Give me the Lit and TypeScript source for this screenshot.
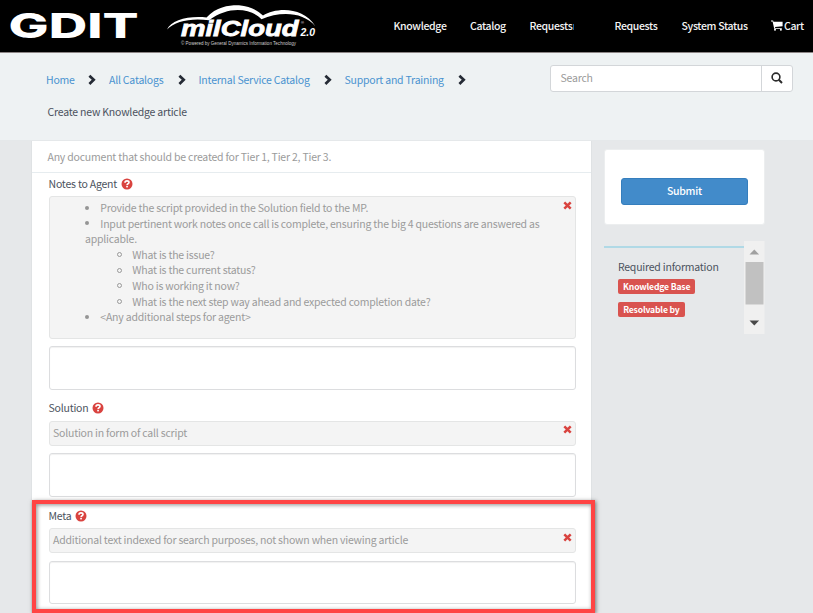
import { LitElement, html, css } from "lit";
import { customElement, property } from "lit/decorators.js";

@customElement("help-icon")
class HelpIcon extends LitElement {
  static styles = css`
    :host { display: block; width: 12px; height: 12px; }
    svg { display: block; }
  `;
  render() {
    return html`<svg width="12" height="12" viewBox="0 0 12 12">
      <circle cx="6" cy="6" r="5.5" fill="#d9433f" />
      <path d="M4 4.7C4 3.4 5 2.9 6 2.9S8 3.4 8 4.5C8 5.8 6.1 5.7 6.1 7" fill="none" stroke="#fff" stroke-width="1.6" />
      <rect x="5.2" y="7.8" width="1.7" height="1.6" fill="#fff" />
    </svg>`;
  }
}

@customElement("form-field")
class FormField extends LitElement {
  @property() label = "";
  @property() hint = "";
  @property({ type: Boolean }) tall = false;

  static styles = css`
    :host { display: flex; flex-direction: column; height: 107.3px; }
    :host([tall]) { height: 224.5px; }
    .label { display: flex; align-items: center; height: 22.5px; padding-bottom: 1px; gap: 3.5px; color: #4c5360; }
    .hint {
      display: flex; justify-content: space-between; box-sizing: border-box; height: 25.5px;
      padding: 0 3.5px; border: 1px solid #e4e5e5; border-radius: 3px; background: #f4f4f4; color: #9b9b9b;
    }
    :host([tall]) .hint { height: 143px; }
    .copy { line-height: 22px; }
    .close { flex: none; display: block; width: 9px; height: 9px; margin-top: 3.8px; }
    .input {
      box-sizing: border-box; height: 43.5px; margin-top: 7.3px; background: #fff;
      border: 1px solid #dcdddf; border-radius: 3px; box-shadow: inset 0 1px 1px rgba(0,0,0,.06);
    }
  `;
  render() {
    return html`
      <div class="label"><span>${this.label}</span><help-icon></help-icon></div>
      <div class="hint">
        <div class="copy">${this.hint}<slot></slot></div>
        <svg class="close" viewBox="0 0 9 9">
          <path d="M1.3 1.3L7.7 7.7M7.7 1.3L1.3 7.7" stroke="#d9433f" stroke-width="2.5" />
        </svg>
      </div>
      <div class="input"></div>`;
  }
}

@customElement("app-root")
class AppRoot extends LitElement {
  static styles = css`
    :host {
      display: block; position: relative; width: 813px; height: 613px; overflow: hidden;
      background: #e6e8ea; font: 10.5px/16px "Noto Sans CJK SC", "Noto Sans", sans-serif;
      letter-spacing: -.21px; white-space: nowrap;
    }
    .top { display: flex; box-sizing: border-box; height: 53px; background: #000; border-bottom: 1px solid #8c8585; }
    .logos { flex: none; display: block; width: 393.5px; height: 52px; letter-spacing: 0; }
    .nav { display: flex; align-items: center; height: 51px; color: #f4f4f4; font-weight: 500; letter-spacing: -.35px; }
    .nav span { display: block; }
    .n1 { width: 76.5px; } .n2 { width: 59.5px; } .n3 { width: 85px; }
    .n4 { width: 67px; } .n5 { width: 89px; }
    .tick { display: inline-block; width: 1px; height: 6px; margin-left: 1px; background: #12609c; }
    .cart { display: block; width: 12px; height: 11px; margin-right: 1.5px; }
    .sub {
      display: flex; justify-content: space-between; box-sizing: border-box; height: 87.5px;
      padding: 11.5px 20px 0 46px; background: #eef2f3; border-bottom: 1px solid #e5e8ea;
    }
    .crumbs { display: flex; height: 30px; align-items: center; color: #4a92d0; }
    .chev { display: block; width: 8px; height: 12px; margin-right: 13px; }
    .title { margin: 9px 0 0 1.5px; color: #4c5360; }
    .search { box-sizing: border-box; display: flex; width: 243px; height: 27px; border: 1px solid #d3d6d9; border-radius: 3px; background: #fff; overflow: hidden; }
    .query { flex: 1; padding-left: 9.5px; line-height: 24px; color: #9a9a9a; }
    .go { width: 30px; border-left: 1px solid #d3d6d9; display: flex; align-items: center; justify-content: center; }
    .body { display: flex; align-items: flex-start; gap: 12.5px; padding-left: 31px; }
    .form { box-sizing: border-box; width: 561px; height: 473px; background: #fff; border-left: 1px solid #dfe2e4; border-right: 1px solid #dfe2e4; }
    .intro { height: 31px; padding-left: 15.5px; line-height: 31px; border-bottom: 1px solid #e6ecef; color: #9b9b9b; }
    .fields { padding: 0 15px 0 16.5px; }
    .row { display: flex; height: 15.62px; line-height: 15.62px; }
    .list { padding-top: 3px; }
    .row.a { padding-left: 32px; }
    .row.b { padding-left: 64px; }
    .mark { width: 15.3px; display: flex; align-items: center; }
    .dot { width: 4px; height: 4px; border-radius: 50%; background: #959595; }
    .ring { box-sizing: border-box; width: 5px; height: 5px; border-radius: 50%; border: 1px solid #999; }
    .side { width: 161px; margin-left: -.6px; padding-top: 8.5px; }
    .card { box-sizing: border-box; height: 76px; border: 1px solid #eceeef; border-radius: 3px; background: #fff; padding: 27.5px 16px 0; }
    .submit { box-sizing: border-box; height: 27px; border-radius: 3px; border: 1px solid #357ebd; background: #428bca; color: #fff; text-align: center; line-height: 23.5px; font-weight: 500; letter-spacing: -.3px; }
    .required { display: flex; height: 93px; margin-top: 16px; }
    .info { flex: 1; box-sizing: border-box; margin-top: 5px; padding: 11px 0 0 14px; border-top: 2px solid #b0d9e6; color: #4c5360; }
    .tag { display: block; height: 14.5px; margin-bottom: 8.5px; border-radius: 2px; background: #d9534f; color: #fff; font-size: 8.6px; font-weight: 700; line-height: 14.5px; text-align: center; letter-spacing: -.16px; }
    .t1 { width: 77.5px; margin-top: 4px; }
    .t2 { width: 67px; }
    .bar { display: block; width: 20.5px; height: 93px; }
    .mark-area { position: absolute; box-sizing: border-box; left: 32px; top: 500px; width: 563px; height: 113px; border: 4px solid #ff4444; box-shadow: 1px 1px 4px rgba(0,0,0,.5), inset 1px 1px 4px rgba(0,0,0,.45); }
  `;

  crumbs = [
    { text: "Home", width: 42 },
    { text: "All Catalogs", width: 68.5 },
    { text: "Internal Service Catalog", width: 125 },
    { text: "Support and Training", width: 113 },
  ];

  row(level: string, text: string) {
    return html`<div class="row ${level}"><div class="mark"><div class=${level === "a" ? "dot" : "ring"}></div></div><span>${text}</span></div>`;
  }

  render() {
    return html`
      <header class="top">
        <svg class="logos" viewBox="0 0 393.5 52">
          <g fill="#fff">
            <text x="8.5" y="37.5" font-family="Inter" font-weight="800" font-size="34.3" textLength="130" lengthAdjust="spacingAndGlyphs">GDIT</text>
            <path d="M167 29.5C171 20 189 15.5 206.5 17.5C217 6 230 5 239 5.2C250 6 258 10.5 263 15.5C276 7.5 303 6 315.5 26.5C303 11.5 280 11.5 261.5 19.2C252 9 230 4.5 209 20.2C191 17.8 175 21 167 29.5Z" />
            <text x="181" y="36.2" font-family="Liberation Sans" font-weight="700" font-style="italic" font-size="22" textLength="117.5" lengthAdjust="spacingAndGlyphs" stroke="#fff" stroke-width=".8">milCloud</text>
            <text x="300.5" y="36.3" font-family="Liberation Sans" font-weight="700" font-style="italic" font-size="10.8" textLength="14.5" lengthAdjust="spacingAndGlyphs">2.0</text>
            <text x="301" y="23.5" font-family="Liberation Sans" font-size="4">®</text>
            <text x="181" y="44.6" font-family="Liberation Sans" font-size="4.7" textLength="115" lengthAdjust="spacingAndGlyphs" fill="#d0d0d0">© Powered by General Dynamics Information Technology</text>
          </g>
        </svg>
        <nav class="nav">
          <span class="n1">Knowledge</span><span class="n2">Catalog</span>
          <span class="n3">Requests<i class="tick"></i></span><span class="n4">Requests</span>
          <span class="n5">System Status</span>
          <svg class="cart" viewBox="0 0 12 11">
            <path d="M0 .6H2.1L2.5 1.8H11.6V6.2L4 7.1L4.2 7.9H10.8V8.8H3.2L1.6 1.5H0Z" fill="#fff" />
            <circle cx="4" cy="9.8" r="1" fill="#fff" /><circle cx="9.9" cy="9.8" r="1" fill="#fff" />
          </svg>
          <span>Cart</span>
        </nav>
      </header>
      <section class="sub">
        <div>
          <div class="crumbs">
            ${this.crumbs.map(
              (c) => html`<span style="width:${c.width}px">${c.text}</span>
                <svg class="chev" viewBox="0 0 8 12"><path d="M1.4 1.7L5.7 5.8L1.4 9.9" fill="none" stroke="#252b35" stroke-width="2.7" /></svg>`
            )}
          </div>
          <div class="title">Create new Knowledge article</div>
        </div>
        <div class="search">
          <div class="query">Search</div>
          <div class="go"><svg width="12" height="12" viewBox="0 0 12 12"><circle cx="5" cy="5" r="3.9" fill="none" stroke="#2b2b2b" stroke-width="1.6" /><path d="M7.8 7.8L11 11" stroke="#2b2b2b" stroke-width="2" /></svg></div>
        </div>
      </section>
      <main class="body">
        <section class="form">
          <div class="intro">Any document that should be created for Tier 1, Tier 2, Tier 3.</div>
          <div class="fields">
            <form-field label="Notes to Agent" tall>
              <div class="list">
                ${this.row("a", "Provide the script provided in the Solution field to the MP.")}
                ${this.row("a", "Input pertinent work notes once call is complete, ensuring the big 4 questions are answered as")}
                <div class="row a">applicable.</div>
                ${this.row("b", "What is the issue?")}
                ${this.row("b", "What is the current status?")}
                ${this.row("b", "Who is working it now?")}
                ${this.row("b", "What is the next step way ahead and expected completion date?")}
                ${this.row("a", "<Any additional steps for agent>")}
              </div>
            </form-field>
            <form-field label="Solution" hint="Solution in form of call script"></form-field>
            <form-field label="Meta" hint="Additional text indexed for search purposes, not shown when viewing article"></form-field>
          </div>
        </section>
        <aside class="side">
          <div class="card"><div class="submit">Submit</div></div>
          <div class="required">
            <div class="info">
              <div>Required information</div>
              <span class="tag t1">Knowledge Base</span>
              <span class="tag t2">Resolvable by</span>
            </div>
            <svg class="bar" viewBox="0 0 20.5 93">
              <rect width="20.5" height="93" fill="#f0f0f0" />
              <rect x="1.5" y="21" width="18" height="42.5" fill="#c1c1c1" />
              <path d="M5.5 13.5L10.3 8.5L15.1 13.5Z" fill="#a0a0a0" />
              <path d="M5.5 79.5H15.1L10.3 84.5Z" fill="#484848" />
            </svg>
          </div>
        </aside>
      </main>
      <div class="mark-area"></div>`;
  }
}
